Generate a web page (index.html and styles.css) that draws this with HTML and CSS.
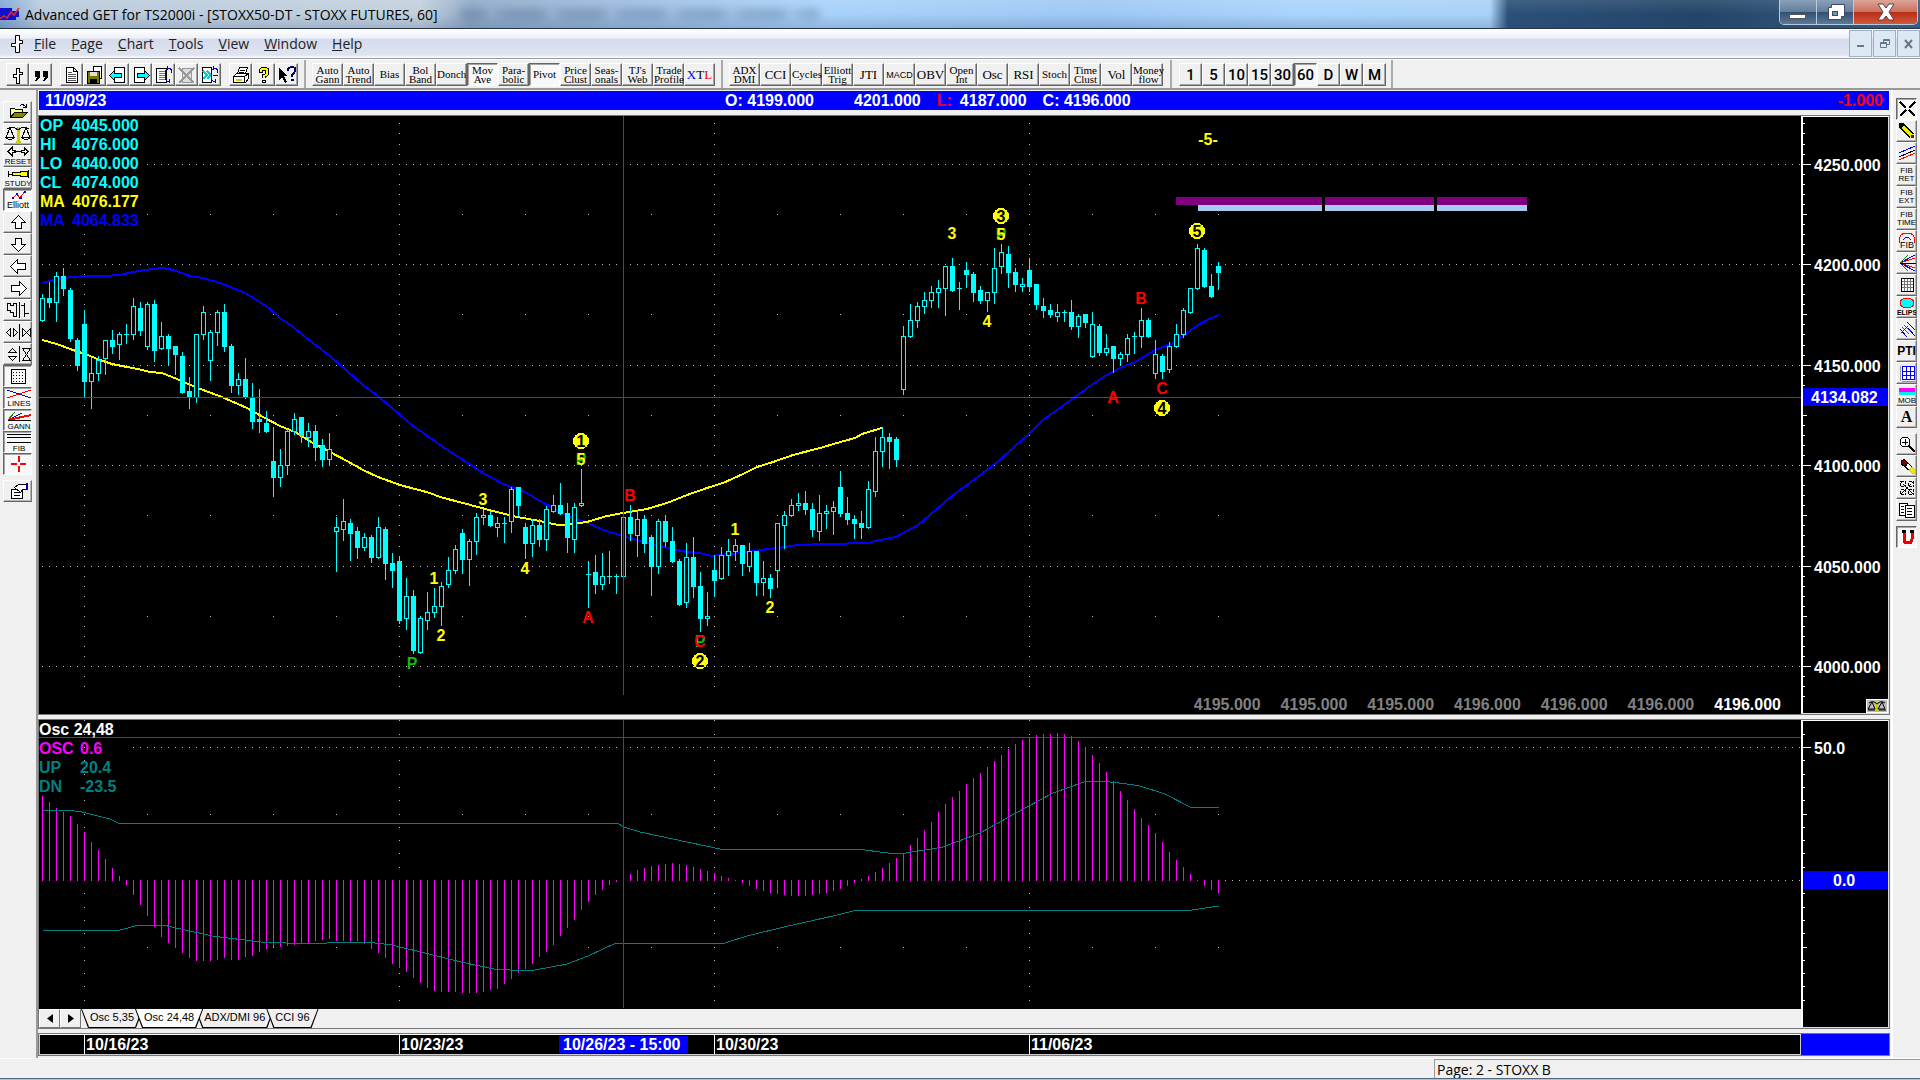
FILE: index.html
```html
<!DOCTYPE html>
<html lang="en">
<head>
<meta charset="utf-8">
<title>Advanced GET for TS2000i</title>
<link rel="stylesheet" href="styles.css">
</head>
<body>
<header class="titlebar">
  <svg class="app-icon" width="20" height="16" viewBox="0 0 20 16"><path d="M0 2h12v3h7v6h-3v3H0z" fill="#11c"/><path d="M0 13l4-3 3 2 4-6 3 3 5-7" fill="none" stroke="#e22" stroke-width="1.5"/></svg>
  <h1>Advanced GET for TS2000i - [STOXX50-DT - STOXX FUTURES, 60]</h1>
  <div class="glass-smear"></div>
  <div class="window-controls">
    <button class="wc" aria-label="Minimize"><svg width="20" height="20"><rect x="1.500" y="12.500" width="16" height="4" fill="#fff" stroke="#555"/></svg></button>
    <button class="wc" aria-label="Restore"><svg width="22" height="20"><path d="M7.500 2.500h13v12h-3v3h-13v-12h3z" fill="#fff" stroke="#446"/><rect x="8.500" y="9.500" width="5" height="4" fill="#69b" stroke="#446"/></svg></button>
    <button class="wc wc-close" aria-label="Close"><svg width="20" height="18"><path d="M2 1h5l3 4 3-4h5l-5 8 5 8h-5l-3-4-3 4H2l5-8z" fill="#fff" stroke="#544"/></svg></button>
  </div>
</header>

<nav class="menubar">
  <svg class="doc-icon" width="14" height="20" viewBox="0 0 14 20"><path d="M5.500 1.500h4v5h3v3h-3v9h-4v-6h-4v-3h4z" fill="#fff" stroke="#000"/></svg>
  <a href="#"><u>F</u>ile</a><a href="#"><u>P</u>age</a><a href="#"><u>C</u>hart</a><a href="#"><u>T</u>ools</a><a href="#"><u>V</u>iew</a><a href="#"><u>W</u>indow</a><a href="#"><u>H</u>elp</a>
  <div class="mdi-controls">
    <button aria-label="Minimize chart"><svg width="14" height="14"><rect x="3" y="8" width="7" height="2" fill="#678"/></svg></button>
    <button aria-label="Restore chart"><svg width="14" height="14" fill="none" stroke="#678"><path d="M5.500 5V2.500h6v5H9M5 3.500h6"/><path d="M2.500 5.500h6v5h-6zM2 6.500h6"/></svg></button>
    <button aria-label="Close chart"><svg width="14" height="14"><path d="M3 3l7 8M10 3l-7 8" stroke="#678" stroke-width="2"/></svg></button>
  </div>
</nav>

<div class="toolbar">
  <div class="tools">
    <button class="tb" aria-label="Chart"><svg class="ic"><path d="M8.500 3.500h3v4h3v2h-3v9h-3v-6h-3v-3h3z" fill="#fff" stroke="#000"/></svg></button>
    <button class="tb" aria-label="Quote"><svg class="ic"><path d="M4 6h5v6l-3 4H4l2-4H4zM12 6h5v6l-3 4h-2l2-4h-2z"/></svg></button>
  </div>
  <div class="tools">
    <button class="tb" aria-label="New"><svg class="ic"><path d="M4.500 2.500h7l4 4v11h-11zM11.500 2.500v4h4" fill="#fff" stroke="#000"/><path d="M6 7h4M6 9h8M6 11h8M6 13h8M6 15h8" stroke="#555"/></svg></button>
    <button class="tb" aria-label="Save pages"><svg class="ic"><path d="M8.500 1.500h8v12h-8z" fill="#fff" stroke="#000"/><path d="M2.500 6.500h12v12h-12z" fill="#770" stroke="#000"/><path d="M5 7h7v4H5z" fill="#ddd"/><path d="M5 14h7v4H5z"/></svg></button>
    <button class="tb" aria-label="Previous page"><svg class="ic"><path d="M6.500 2.500h10v15h-10z" fill="#fff" stroke="#000"/><path d="M1.500 10.500l5-5v3h7v4h-7v3z" fill="#0ff" stroke="#000"/></svg></button>
    <button class="tb" aria-label="Next page"><svg class="ic"><path d="M3.500 2.500h10v15h-10z" fill="#fff" stroke="#000"/><path d="M18.500 10.500l-5-5v3h-7v4h7v3z" fill="#0ff" stroke="#000"/></svg></button>
    <button class="tb" aria-label="Cycle page"><svg class="ic"><path d="M2.500 3.500h10v14h-10z" fill="#fff" stroke="#000"/><path d="M4.500 6h6M4.500 8h6M4.500 10h6M4.500 12h6M4.500 14h6" stroke="#777"/><path d="M15 3q-4 0-4 7t4 7M13 1v4M15 14v4M15 3q3 1 3 5" fill="none" stroke="#00c"/></svg></button>
    <button class="tb" aria-label="Delete page"><svg class="ic"><path d="M5.500 3.500h9v14h-9z" fill="#ddd" stroke="#999"/><path d="M2 3l15 15M17 3L2 18" stroke="#999" stroke-width="2"/></svg></button>
    <button class="tb" aria-label="Cycle all"><svg class="ic"><path d="M2.500 2.500h9v15h-9z" fill="#fff" stroke="#000"/><path d="M3 6l4 4-4 4M7 6l4 4-4 4" fill="none" stroke="#0cc" stroke-width="2"/><path d="M15 3q-4 0-4 7t4 7M13 1v4M15 14v4M15 3q3 1 3 5M13 10h5" fill="none" stroke="#00c"/></svg></button>
  </div>
  <div class="tools">
    <button class="tb" aria-label="Print"><svg class="ic"><path d="M6.500 8.500l2-6h8l-2 6M2.500 11.500l3-3h12v5l-3 4h-12zM2.500 11.500h11l4-3M13.500 11.500v6" fill="#fff" stroke="#000"/><path d="M5 15h6" stroke="#cc0" stroke-width="2"/><path d="M9 5h5M8 7h5" stroke="#000"/></svg></button>
    <button class="tb" aria-label="Help"><svg class="ic"><path d="M7 8V5q0-1 3-1t3 1v3q0 2-3 3v2" fill="none" stroke="#000" stroke-width="4"/><path d="M7 7V5q0-1 3-1t3 1v3q0 2-3 3v2" fill="none" stroke="#ff0" stroke-width="2"/><path d="M8.500 15.500h3v2h-3z" fill="#ff0" stroke="#000"/></svg></button>
    <button class="tb" aria-label="What is this"><svg class="ic"><path d="M2 3l9 8H7l3 6-2 1-3-6-3 3z"/><path d="M11 6q0-4 4-4t3 4q0 2-3 4v2M14 15h3" fill="none" stroke="#006" stroke-width="2"/></svg></button>
  </div>
  <div class="tools wide">
    <button class="tb">Auto<br>Gann</button><button class="tb">Auto<br>Trend</button><button class="tb">Bias</button><button class="tb">Bol<br>Band</button><button class="tb">Donch</button><button class="tb on">Mov<br>Ave</button><button class="tb">Para-<br>bolic</button><button class="tb on">Pivot</button><button class="tb">Price<br>Clust</button><button class="tb">Seas-<br>onals</button><button class="tb">TJ's<br>Web</button><button class="tb">Trade<br>Profile</button><button class="tb big"><span><i class="blue">X</i>T<i class="red">L</i></span></button>
  </div>
  <div class="tools wide">
    <button class="tb">ADX<br>DMI</button><button class="tb big">CCI</button><button class="tb">Cycles</button><button class="tb">Elliott<br>Trig</button><button class="tb big">JTI</button><button class="tb sans">MACD</button><button class="tb big">OBV</button><button class="tb">Open<br>Int</button><button class="tb big">Osc</button><button class="tb big">RSI</button><button class="tb">Stoch</button><button class="tb">Time<br>Clust</button><button class="tb big">Vol</button><button class="tb">Money<br>flow</button>
  </div>
  <div class="tools periods">
    <button class="tb">1</button><button class="tb">5</button><button class="tb">10</button><button class="tb">15</button><button class="tb">30</button><button class="tb on">60</button><button class="tb">D</button><button class="tb">W</button><button class="tb">M</button>
  </div>
</div>

<main class="desk">
  <aside class="side side-left">
    <button class="sb" aria-label="Open"><svg class="sic"><path d="M6.500 15.500v-9h4l1 1h7v3h-8z" fill="#ff8" stroke="#000"/><path d="M6.500 15.500l4-5h13l-5 5z" fill="#880" stroke="#000"/><path d="M16 4q3-3 6 1m0-3v3h-3" fill="none" stroke="#000"/></svg></button>
    <button class="sb" aria-label="Scales"><svg class="sic"><path d="M14 3v15M12 18h5" stroke="#cc0" stroke-width="3"/><path d="M3 5q5-4 11 1 6-5 11-1M6 4l-4 9h8zM22 4l-4 9h8zM2 14q4 3 8 0M18 14q4 3 8 0" fill="none" stroke="#000"/></svg></button>
    <button class="sb"><svg class="sic"><path d="M10 5.500h8M4 5.500l4-4v3h3v2H8v3zM24 5.500l-4-4v3h-3v2h3v3z" fill="#fff" stroke="#000"/><text x="14" y="18">RESET</text></svg></button>
    <button class="sb"><svg class="sic"><path d="M4 3v6M4 6h4M24 2v8" stroke="#000"/><path d="M8.500 4.500h8v-1h7v5h-7v-1h-8z" fill="#ff0" stroke="#000"/><text x="14" y="18">STUDY</text></svg></button>
    <button class="sb on"><svg class="sic"><path d="M9 8l4-4 3 4 5-7" fill="none" stroke="#f00"/><path d="M8 7h2v2H8zM12 3h2v2h-2zM15 7h3v2h-3zM20 1h2v2h-2z" fill="#00f"/><text x="14" y="18" class="t9">Elliott</text></svg></button>
    <button class="sb" aria-label="Up"><svg class="sic"><path d="M14.500 3.500l7 7h-4v6h-6v-6h-4z" fill="#fff" stroke="#000"/></svg></button>
    <button class="sb" aria-label="Down"><svg class="sic"><path d="M14.500 17.500l7-7h-4v-6h-6v6h-4z" fill="#fff" stroke="#000"/></svg></button>
    <button class="sb" aria-label="Left"><svg class="sic"><path d="M6.500 10.500l7-7v4h8v6h-8v4z" fill="#fff" stroke="#000"/></svg></button>
    <button class="sb" aria-label="Right"><svg class="sic"><path d="M22.500 10.500l-7-7v4h-8v6h8v4z" fill="#fff" stroke="#000"/></svg></button>
    <button class="sb" aria-label="Bar style"><svg class="sic"><path d="M3.500 3.500h3v2h3v-2h3v13h-3v-4h-3v-2h-3zM15.500 2v16M20.500 3v14M17 5.500h3M21 13.500h4" fill="none" stroke="#000"/></svg></button>
    <button class="sb" aria-label="Bar spacing"><svg class="sic"><path d="M6.500 6.500v8l-4-4zM9.500 6.500v8l4-4zM15.500 2v16M18.500 6.500v8l4-4zM26.500 6.500v8l-4-4z" fill="none" stroke="#000"/></svg></button>
    <button class="sb" aria-label="Vertical scale"><svg class="sic"><path d="M4.500 8.500h8l-4-4zM4.500 12.500h8l-4 4zM15.500 2v16M18.500 4.500h8l-8 12h8z" fill="none" stroke="#000"/></svg></button>
    <button class="sb on" aria-label="Grid"><svg class="sic"><rect x="7.500" y="3.500" width="14" height="14" fill="none" stroke="#000"/><path d="M9 6.500h12M9 9.500h12M9 12.500h12M9 15.500h12" stroke="#000" stroke-dasharray="1 2"/></svg></button>
    <button class="sb on"><svg class="sic"><path d="M3 2l24 8" stroke="#00f"/><path d="M27 2L3 10" stroke="#f00"/><text x="15" y="18">LINES</text></svg></button>
    <button class="sb on"><svg class="sic"><path d="M4 10L11 2" stroke="#080"/><path d="M4 10L18 3" stroke="#00f"/><path d="M4 10l23-5" stroke="#f00" stroke-width="2"/><path d="M4 10.500h23" stroke="#000"/><text x="15" y="19">GANN</text></svg></button>
    <button class="sb on"><svg class="sic"><path d="M3 2.500h24M3 5.500h24M3 10.500h24" stroke="#000"/><text x="15" y="19">FIB</text></svg></button>
    <button class="sb on" aria-label="Crosshair"><svg class="sic"><path d="M7 9h6v2H7zM16 9h6v2h-6zM14 2h2v6h-2zM14 12h2v6h-2z" fill="#f00"/></svg></button>
    <button class="sb gap" aria-label="Properties"><svg class="sic"><path d="M7.500 8.500h11v9h-11z" fill="#fff" stroke="#000"/><path d="M10 11.500h6M10 14.500h6" stroke="#000"/><path d="M10.500 6.500l4-3h8v5h-4l-2 3z" fill="#fff" stroke="#000"/><path d="M22 2h2v7h-2z" fill="#00a"/></svg></button>
  </aside>

  <section class="workspace">
    <div class="infobar">
      <span class="date">11/09/23</span>
      <div class="quote"><span class="q-o">O: 4199.000</span><span class="q-h">4201.000</span><span class="q-l"><b class="red">L:</b><b>4187.000</b></span><span>C: 4196.000</span></div>
      <span class="red">-1.000</span>
    </div>

    <div class="panel panel-price">
      <div class="plot">
        <svg class="canvas" id="price-plot" role="img" aria-label="STOXX50 60 minute candles"></svg>
        <table class="legend">
          <tr class="aqua"><th>OP</th><td>4045.000</td></tr>
          <tr class="aqua"><th>HI</th><td>4076.000</td></tr>
          <tr class="aqua"><th>LO</th><td>4040.000</td></tr>
          <tr class="aqua"><th>CL</th><td>4074.000</td></tr>
          <tr class="yellow"><th>MA</th><td>4076.177</td></tr>
          <tr class="blue"><th>MA</th><td>4064.833</td></tr>
        </table>
        <div class="last-prices"><span>4195.000</span><span>4195.000</span><span>4195.000</span><span>4196.000</span><span>4196.000</span><span>4196.000</span><strong>4196.000</strong></div>
      </div>
      <div class="axis">
        <svg class="canvas" id="price-axis" role="img" aria-label="Price scale"></svg>
        <button class="scale-btn" aria-label="Scale"><svg width="20" height="12"><path d="M10 2v9M8 11h4" stroke="#cc0" stroke-width="2"/><path d="M2 3q4-3 8 1 4-4 8-1M5 2l-4 7h7zM15 2l-4 7h7zM1 10h7M12 10h7" fill="none" stroke="#000"/></svg></button>
      </div>
    </div>

    <div class="panel panel-osc">
      <div class="osc-stack">
        <div class="plot">
          <svg class="canvas" id="osc-plot" role="img" aria-label="Oscillator"></svg>
          <table class="legend legend-osc">
            <tr class="white"><th colspan="2">Osc 24,48</th></tr>
            <tr class="magenta"><th>OSC</th><td>0.6</td></tr>
            <tr class="teal"><th>UP</th><td>20.4</td></tr>
            <tr class="teal"><th>DN</th><td>-23.5</td></tr>
          </table>
        </div>
        <div class="tabs">
          <button class="nav" aria-label="Scroll tabs left"><svg width="6" height="9"><path d="M6 0v9L0 4.500z"/></svg></button>
          <button class="nav" aria-label="Scroll tabs right"><svg width="6" height="9"><path d="M0 0v9l6-4.500z"/></svg></button>
          <button class="tab"><span>Osc 5,35</span></button><button class="tab active"><span>Osc 24,48</span></button><button class="tab"><span>ADX/DMI 96</span></button><button class="tab"><span>CCI 96</span></button>
        </div>
      </div>
      <div class="axis"><svg class="canvas" id="osc-axis" role="img" aria-label="Oscillator scale"></svg></div>
    </div>

    <div class="dates">
      <div class="date-strip">
        <svg class="canvas" id="date-axis" role="img" aria-label="Dates"></svg>
      </div>
      <div class="date-end"></div>
    </div>
  </section>

  <aside class="side side-right">
    <button class="sb on" aria-label="Pointer"><svg class="ric"><path d="M3 3l6 6M12 11l6 6M18 3l-6 6M9 11l-6 6" stroke="#000" stroke-width="2"/></svg></button>
    <button class="sb" aria-label="Pencil"><svg class="ric"><path d="M4 4l11 11" stroke="#000" stroke-width="6"/><path d="M6 6l9 9" stroke="#ee0" stroke-width="3"/><path d="M2 2h4v4H2z"/><path d="M14 14h3v3h-3z" fill="#900"/></svg></button>
    <button class="sb" aria-label="Trend lines"><svg class="ric"><path d="M2 10L18 3" stroke="#00f"/><path d="M2 14L18 7" stroke="#000"/><path d="M2 17l16-7" stroke="#f00"/></svg></button>
    <button class="sb two">FIB<br>RET</button>
    <button class="sb two">FIB<br>EXT</button>
    <button class="sb two">FIB<br>TIME</button>
    <button class="sb"><svg class="ric"><path d="M3 12q-2-10 7-10t7 10" fill="none" stroke="#f00"/><path d="M6 9q4-6 8 0" fill="none" stroke="#00f"/><text x="10" y="17" class="t9">FIB</text></svg></button>
    <button class="sb" aria-label="Gann fan"><svg class="ric"><path d="M3 10L18 2M3 10l15 8" stroke="#00f"/><path d="M3 10l15-5M3 10l15 5" stroke="#f00"/><path d="M3 10l8-8M3 10l8 8" stroke="#080"/><path d="M3 10.500h16" stroke="#000"/></svg></button>
    <button class="sb" aria-label="Box grid"><svg class="ric"><path d="M4.500 3.500h12v13h-12z" fill="#fff" stroke="#000"/><path d="M7.500 4v12M10.500 4v12M13.500 4v12M5 6.500h11M5 9.500h11M5 12.500h11" stroke="#777"/></svg></button>
    <button class="sb"><svg class="ric"><ellipse cx="10" cy="6" rx="7" ry="5" fill="#0ff" stroke="#f00"/><text x="10" y="18" class="b">ELIPS</text></svg></button>
    <button class="sb" aria-label="Pitchfork"><svg class="ric"><path d="M10 3l8 8M3 10l7 8M11 9l7 8" stroke="#00a"/><path d="M7 6l7 7M5 8l7 7" stroke="#080"/><path d="M13 5l-9 9" stroke="#a00" stroke-dasharray="2 1"/></svg></button>
    <button class="sb pti">PTI</button>
    <button class="sb" aria-label="Blue grid"><svg class="ric"><path d="M5.500 3.500h12v13h-12zM9.500 3v14M13.500 3v14M5 8.500h13M5 12.500h13" fill="#fff" stroke="#00f"/><path d="M3.500 3v15M5 18.500h13" stroke="#999"/></svg></button>
    <button class="sb"><svg class="ric"><path d="M2 3h16v4H2z" fill="#f0f"/><path d="M2 7h16v3H2z" fill="#0ee"/><text x="10" y="18">MOB</text></svg></button>
    <button class="sb letter">A</button>
    <button class="sb gap" aria-label="Zoom"><svg class="ric"><circle cx="8" cy="8" r="5" fill="#fff" stroke="#000"/><path d="M8.500 5v6M5 8.500h6" stroke="#000"/><path d="M12 12l6 6" stroke="#000" stroke-width="2"/></svg></button>
    <button class="sb" aria-label="Eraser"><svg class="ric"><path d="M4 5.500L7 3l4 4-3 4-4-3z" fill="#700" stroke="#000"/><path d="M8 11l3-4 4 4-3 3z" fill="#fff" stroke="#000"/><path d="M12 14l3-3 3 3v3h-3z" fill="#ee0" stroke="#cc0"/></svg></button>
    <button class="sb" aria-label="Delete all"><svg class="ric"><path d="M3.500 3.500h5v5h-5zM11.500 3.500h5v5h-5zM3.500 11.500h5v5h-5zM11.500 11.500h5v5h-5zM3 3l14 14M17 3L3 17" fill="none" stroke="#000" stroke-dasharray="3 1"/></svg></button>
    <button class="sb" aria-label="Copy"><svg class="ric"><path d="M2.500 3.500h8v12h-8z" fill="#fff" stroke="#000"/><path d="M8.500 5.500h9v12h-9z" fill="#fff" stroke="#000"/><path d="M4 7l3-1M4 10l3-1M4 13l3-1M10 9l5-1M10 12l5-1M10 15l5-1" stroke="#000"/></svg></button>
    <button class="sb on gap" aria-label="Magnet"><svg class="ric"><path d="M7 4v8q0 4 4 4t4-4V4" fill="none" stroke="#e00" stroke-width="3"/><path d="M5 3h4v3H5zM13 3h4v3h-4z"/></svg></button>
  </aside>
</main>

<footer class="status"><span>Page: 2 - STOXX B</span></footer>
<div class="taskbar-edge"></div>
<script src="chart.js"></script>
</body>
</html>
```
FILE: styles.css
```css
* { box-sizing: border-box; }
body {
  margin: 0;
  height: 100vh;
  display: flex;
  flex-direction: column;
  background: #f0f0f0;
  font-family: "Open Sans", "Noto Sans", sans-serif;
  font-size: 14px;
  color: #000;
  overflow: hidden;
}
button { font: inherit; color: inherit; padding: 0; margin: 0; border: 0; background: none; }
svg { display: block; }
i { font-style: normal; }
.red { color: #f00; }
.blue { color: #00f; }
.aqua { color: #0ff; }
.yellow { color: #ff0; }
.magenta { color: #f0f; }
.teal { color: #008080; }
.white { color: #fff; }

.titlebar {
  display: flex;
  align-items: center;
  height: 29px;
  flex: none;
  position: relative;
  border-bottom: 1px solid #26364a;
  background:
    linear-gradient(rgba(255,255,255,.1), rgba(255,255,255,0) 50%, rgba(40,70,110,.2)),
    linear-gradient(90deg, #7fa5d6 0, #b9cbdd 40px, #c3d0dd 420px, #90aac8 470px, #9fc0e4 660px, #a9d2fa 820px, #9ec8f4 1100px, #a9d4fc 1300px, #a9d2f8 1490px, #2b5079 1508px, #234568 1700px, #3a5f86 100%);
}
.app-icon { margin-right: 5px; }
.titlebar h1 { margin: 0; font-size: 14px; font-weight: 400; white-space: nowrap; z-index: 1; }
.glass-smear {
  width: 360px;
  height: 10px;
  margin-left: 22px;
  filter: blur(4px);
  opacity: .35;
  background: repeating-linear-gradient(90deg, #456080 0 22px, #8aa5c4 28px 34px, #50698a 44px 60px);
}
.window-controls {
  display: flex;
  align-self: flex-start;
  margin-left: auto;
  margin-right: 2px;
  height: 25px;
  border: 1px solid #b9cada;
  border-top: 0;
  border-radius: 0 0 5px 5px;
  overflow: hidden;
}
.wc {
  width: 37px;
  display: grid;
  place-items: center;
  border-right: 1px solid #b9cada;
  background: linear-gradient(#8aa0b8, #657f9c 48%, #31506f 50%, #5a7a9a);
}
.wc-close { width: 63px; border: 0; background: linear-gradient(#dca598, #cc7060 48%, #b82c14 50%, #d05a3c); }

.menubar {
  display: flex;
  align-items: center;
  gap: 15px;
  height: 30px;
  flex: none;
  padding-left: 10px;
  border-bottom: 1px solid #999;
  background: linear-gradient(#fff, #eef1f8 30%, #d5dbeb 36%, #dfe4f3 90%, #fff);
}
.doc-icon { margin-right: -5px; }
.menubar a { color: #222; text-decoration: none; }
.mdi-controls { display: flex; gap: 1px; margin-left: auto; align-self: stretch; padding: 1px 0; }
.mdi-controls button { width: 23px; display: grid; place-items: center; border: 1px solid #9fb0c4; background: #dce9f5; }

.toolbar { display: flex; height: 31px; flex: none; border-top: 1px solid #fff; border-bottom: 2px solid #999; }
.tools { display: flex; padding: 3px 0 2px 8px; }
.tools:first-child { padding-left: 6px; }
.wide { margin-left: 6px; padding-left: 6px; border-left: 2px solid #aaa; }
.periods { margin-left: 7px; padding: 3px 5px 2px 7px; border-left: 2px solid #aaa; border-right: 2px solid #aaa; font: 500 15px/20px Roboto, sans-serif; }
.tb {
  width: 23px;
  height: 23px;
  display: grid;
  place-items: center;
  border: 1px solid;
  border-color: #fff #666 #666 #fff;
  box-shadow: inset -1px -1px #a5a5a5;
  background: #f0f0f0;
  white-space: nowrap;
}
.tb.on, .sb.on { border-color: #666 #fff #fff #666; box-shadow: inset 1px 1px #a5a5a5; background: #f8f8f8; }
.wide .tb { width: 31px; font: 11px/9px "Liberation Serif", serif; text-align: center; }
.wide .tb.big { font-size: 13px; }
.wide .tb.sans { font: 9px/10px "Liberation Sans", sans-serif; }
.ic { width: 20px; height: 20px; shape-rendering: crispEdges; }

.desk { flex: 1; display: flex; min-height: 0; }
.side { flex: none; display: flex; flex-direction: column; }
.side-left { width: 38px; padding: 11px 4px 0 3px; border-right: 2px solid #999; }
.side-right { width: 29px; padding: 8px 3px 0 3px; border-left: 2px solid #fff; }
.sb {
  height: 22px;
  flex: none;
  display: grid;
  place-items: center;
  border: 1px solid;
  border-color: #fff #777 #666 #fff;
  box-shadow: inset -1px -1px #b5b5b5;
  background: #f0f0f0;
  overflow: hidden;
}
.sb.gap { margin-top: 5px; }
.sic { width: 29px; height: 20px; shape-rendering: crispEdges; }
.ric { width: 20px; height: 20px; shape-rendering: crispEdges; }
.sb text { font: 8px "Liberation Sans", sans-serif; text-anchor: middle; }
.sb .t9 { font-size: 9px; }
.sb .b { font-size: 7px; font-weight: 700; }
.sb.two { font: 8px/8px "Liberation Sans", sans-serif; }
.pti { font: 700 12px/12px "Liberation Sans", sans-serif; }
.letter { font: 700 16px/16px "Liberation Serif", serif; }

.workspace {
  flex: 1;
  min-width: 0;
  display: flex;
  flex-direction: column;
  gap: 6px;
  padding: 1px 2px 3px 1px;
  font: 700 16px/19px "Liberation Sans", Arial, sans-serif;
}
.infobar {
  flex: none;
  display: flex;
  height: 19px;
  padding: 0 6px;
  background: #00f;
  color: #fff;
}
.infobar .date { flex: 0 0 37%; }
.infobar .red { color: #f00; margin-left: auto; }
.quote { display: flex; gap: 24px; }
.q-h { margin-left: 16px; }
.q-l { display: flex; gap: 8px; margin: 0 -8px; }
.q-l .red { margin: 0; }

.panel { display: grid; grid-template-columns: minmax(0, 1fr) 88px; min-height: 0; background: #000; outline: 1px solid #777; }
.panel-price { flex: 598 1 0; }
.panel-osc { flex: 308 1 0; }
.plot { position: relative; min-height: 0; min-width: 0; overflow: hidden; background: #000; }
.canvas { position: absolute; inset: 0; width: 100%; height: 100%; shape-rendering: crispEdges; }
.canvas text { font: 700 16px "Liberation Sans", Arial, sans-serif; }
.axis { position: relative; border: 1px solid #ddd; border-top-color: #fff; border-left: 2px solid #fff; }
.scale-btn { position: absolute; right: 0; bottom: 0; width: 22px; height: 14px; border: 1px solid #fff; background: #bbb; }

.legend { position: relative; border-collapse: collapse; background: #000; }
.legend th, .legend td { height: 19px; padding: 0 0 0 1px; text-align: left; line-height: 19px; }
.legend th { min-width: 32px; }
.legend-osc { background: none; }
.legend-osc th { min-width: 40px; padding-left: 0; }
.last-prices { position: absolute; right: 20px; bottom: 0; display: flex; gap: 20px; color: #808080; }
.last-prices strong { color: #fff; }

.osc-stack { display: flex; flex-direction: column; min-height: 0; }
.osc-stack .plot { flex: 1; }
.tabs { display: flex; flex: none; height: 20px; background: #f0f0f0; border-top: 1px solid #000; font: 11px/16px "Liberation Sans", Arial, sans-serif; }
.nav { width: 21px; display: grid; place-items: center; border: 1px solid; border-color: #fff #777 #777 #fff; background: #f0f0f0; }
.tab { margin-right: -8px; padding: 0 1px 1px; background: #000; clip-path: polygon(0 0, 100% 0, calc(100% - 7px) 100%, 7px 100%); }
.tab span { display: block; height: 100%; padding: 0 8px; background: #f0f0f0; clip-path: polygon(0 0, 100% 0, calc(100% - 7px) 100%, 7px 100%); }
.tab.active { z-index: 1; }
.tab.active span { background: #fff; }

.dates { flex: none; display: grid; grid-template-columns: minmax(0, 1fr) 88px; height: 21px; outline: 1px solid #777; }
.date-strip { position: relative; background: #000; border: 1px solid #ccc; border-top-color: #fff; }
.date-end { background: #00f; }

.status { flex: none; display: grid; grid-template-columns: 1434px 1fr; height: 20px; border-top: 1px solid #fff; }
.status span { grid-column: 2; padding-left: 2px; line-height: 19px; border-left: 1px solid #999; border-top: 1px solid #999; }
.taskbar-edge { flex: none; height: 2px; background: #55677a; border-bottom: 1px solid #a9c3d8; }
```
FILE: chart.js
```js
const NS = 'http://www.w3.org/2000/svg';
const CYAN = '#0ff';

// Window coordinates: bar n sits at barX(n).
const barX = n => 42 + 7 * n;
const priceY = p => Math.floor(666.6 - 2.01 * (p - 4000));
const oscY = v => Math.round(880 - 2.66 * v);

function add(parent, tag, attrs, text) {
  const el = document.createElementNS(NS, tag);
  for (const k in attrs) el.setAttribute(k, attrs[k]);
  if (text !== undefined) el.textContent = text;
  parent.appendChild(el);
  return el;
}
const layer = (id, left, top) =>
  add(document.getElementById(id), 'g', { transform: `translate(${-left},${-top})` });
const rect = (g, x, y, width, height, fill) => add(g, 'rect', { x, y, width, height, fill });
const poly = (g, points, stroke, w) =>
  add(g, 'polyline', { points, fill: 'none', stroke, 'stroke-width': w });
const dots = (g, x, y) =>
  add(g, 'line', { x1: x, x2: 4000, y1: y + 0.5, y2: y + 0.5, stroke: '#c0c0c0', 'stroke-dasharray': '1 6' });

// Each candle: high, body top, body bottom, low, and 1 when the bar closed down.
const candles = [
[294,298,321,322,0],[282,298,303,308,1],[272,276,303,322,0],[268,276,289,296,1],[288,290,339,342,1],[338,340,366,371,1],
[310,324,382,397,1],[357,373,382,409,0],[356,360,374,381,0],[340,340,359,375,0],[330,340,347,354,1],[332,334,345,360,0],
[324,334,334,344,0],[298,306,335,340,0],[302,308,331,336,1],[302,304,347,350,0],[300,304,351,362,1],[322,336,349,350,0],
[334,336,349,366,1],[346,346,355,375,1],[352,356,393,394,1],[377,391,398,409,1],[334,334,398,403,0],[306,312,335,340,0],
[330,332,361,381,0],[310,312,333,346,0],[304,312,347,352,1],[344,346,386,393,1],[373,379,386,395,0],[358,379,398,399,1],
[383,397,422,429,1],[389,419,422,433,1],[411,423,432,433,1],[427,461,478,497,1],[449,465,478,487,0],[429,431,466,475,0],
[413,419,432,435,0],[417,417,436,443,1],[423,431,438,447,0],[425,431,448,461,1],[439,445,460,467,1],[433,449,460,466,0],
[517,527,532,572,0],[499,521,530,541,0],[519,523,534,561,1],[527,531,548,559,1],[533,537,548,551,0],[535,537,558,563,1],
[517,527,558,559,0],[527,529,564,580,1],[553,563,571,588,1],[557,561,621,624,1],[578,596,619,630,0],[590,596,651,654,1],
[616,618,653,654,0],[592,612,621,630,0],[588,606,613,618,0],[582,586,607,626,0],[557,570,585,588,0],[545,549,571,574,0],
[529,533,560,574,1],[539,541,560,586,0],[513,517,542,555,0],[510,515,518,525,0],[511,515,526,527,1],[517,523,528,537,0],
[517,523,523,543,0],[487,489,522,533,0],[487,487,506,517,1],[523,527,544,559,1],[519,525,544,557,0],[519,525,540,547,1],
[506,509,540,551,0],[495,505,512,513,0],[483,505,514,515,1],[503,513,538,553,1],[503,507,540,553,0],[469,503,506,507,0],
[561,574,574,608,0],[555,572,585,594,1],[553,576,585,590,0],[551,576,576,584,0],[574,576,576,594,0],[515,517,577,586,0],
[505,517,534,541,1],[511,519,536,557,0],[515,519,544,553,1],[535,537,567,596,1],[519,521,567,574,0],[515,521,542,547,1],
[527,541,562,563,1],[559,561,605,606,1],[543,557,603,608,0],[537,557,587,598,1],[572,586,619,632,1],[592,616,619,626,0],
[555,570,581,597,1],[547,555,579,580,0],[539,551,556,576,0],[539,545,552,561,0],[545,545,564,576,1],[543,551,567,572,0],
[551,551,583,596,1],[561,578,583,596,0],[574,578,589,598,1],[523,523,571,588,0],[511,515,526,549,0],[499,505,516,517,0],
[493,503,506,511,0],[491,503,510,515,1],[503,509,530,537,1],[495,513,532,541,0],[505,511,514,529,0],[501,507,512,535,0],
[471,487,514,517,1],[497,513,520,525,1],[515,519,524,539,1],[511,523,528,539,1],[481,489,528,529,0],[437,451,492,497,0],
[427,437,452,467,0],[433,437,442,469,1],[437,439,460,467,1],[326,336,390,395,0],[304,320,337,338,0],[302,306,321,328,0],
[292,300,307,314,0],[286,292,301,308,0],[280,288,293,308,0],[266,266,289,316,0],[258,266,291,292,1],[282,288,288,310,0],
[262,270,275,288,1],[272,274,293,302,1],[286,290,301,304,1],[292,292,301,312,0],[248,268,293,304,0],[244,252,267,274,0],
[246,254,273,288,1],[268,272,285,292,1],[278,284,287,292,0],[258,270,287,292,1],[284,284,305,310,1],[298,306,311,318,1],
[304,310,315,318,1],[304,312,317,322,0],[310,312,312,322,0],[300,312,327,330,1],[314,316,327,338,0],[314,314,323,328,1],
[312,324,357,358,0],[324,326,353,356,1],[334,348,353,356,0],[346,346,359,373,1],[352,354,359,366,0],[334,338,355,362,0],
[332,336,336,354,0],[308,320,337,348,0],[318,320,337,338,1],[340,354,374,379,0],[354,356,372,379,1],[342,346,370,373,0],
[324,334,347,348,0],[308,310,335,338,0],[288,288,313,314,0],[244,248,289,290,0],[248,250,287,288,1],[274,286,297,298,1],
[262,266,273,290,1]];

const maSlow = '42,283 63,278 85,276 105,276 120,275 133,272 145,270 163,268 173,270 190,276 203,278 223,284 245,293 260,302 270,309 280,318 293,327 313,343 330,356 347,371 363,385 379,397 399,414 413,426 429,437 443,447 463,460 483,473 503,484 525,492 540,501 553,508 570,517 588,523 603,530 623,536 647,543 667,548 687,552 700,553 712,556 720,555 740,553 760,550 778,548 797,545 827,544 868,543 875,541 896,537 903,533 918,525 937,509 953,495 967,485 983,473 1000,460 1015,446 1029,434 1043,420 1060,408 1075,397 1093,384 1107,375 1120,368 1135,362 1155,350 1173,343 1187,333 1198,325 1207,320 1219,315';
const maFast = '42,340 57,344 70,349 85,354 100,360 112,364 127,367 138,369 150,372 162,373 177,379 188,384 203,390 222,397 247,408 263,417 280,426 295,432 313,443 330,452 347,461 363,470 378,477 400,485 430,493 440,497 463,503 493,511 517,517 540,521 558,525 565,525 587,522 607,516 623,513 647,509 667,503 687,495 707,488 723,483 743,474 757,467 773,462 793,455 820,448 837,443 855,438 862,434 882,428';

// Wave labels: text, centre x, baseline, colour.
const waves = [
['P',412,669,'#1b1'],['1',434,584,'#ff0'],['2',441,641,'#ff0'],['3',483,505,'#ff0'],['4',525,574,'#ff0'],
['P',581,465,'#1b1'],['5',581,465,'#ff0'],['A',588,623,'#f00'],['B',630,501,'#f00'],['P',700,647,'#1b1'],['C',700,647,'#f00'],
['1',735,535,'#ff0'],['2',770,613,'#ff0'],['3',952,239,'#ff0'],['P',1001,240,'#1b1'],['5',1001,240,'#ff0'],['4',987,327,'#ff0'],
['B',1141,304,'#f00'],['A',1113,403,'#f00'],['C',1162,394,'#f00'],['-5-',1208,145,'#ff0']];
const majorWaves = [['1',581,441],['2',700,661],['3',1001,216],['5',1197,231],['4',1162,408]];
const weeks = [[84,'10/16/23'],[399,'10/23/23'],[714,'10/30/23'],[1029,'11/06/23']];

// Price panel
let g = layer('price-plot', 39, 116);
for (const p of [4000, 4050, 4100, 4150, 4200, 4250]) dots(g, p === 4250 ? 147 : 42, priceY(p));
for (const [x] of weeks) for (let p = 3990; p <= 4270; p += 5) rect(g, x, priceY(p), 1, 1, '#c0c0c0');
for (const p of [4025, 4075, 4125, 4175, 4225])
  for (let x = 147; x <= 1218; x += 63) rect(g, x, priceY(p), 1, 1, '#c0c0c0');
for (const [x, w] of [[1176, 146], [1325, 109], [1437, 90]]) rect(g, x, 197, w, 8, '#800080');
for (const [x, w] of [[1198, 124], [1325, 109], [1437, 90]]) rect(g, x, 205, w, 6, '#a6caf0');
poly(g, maSlow, '#00f', 2);
poly(g, maFast, '#ff0', 2);
candles.forEach(([high, top, bottom, low, down], n) => {
  const x = barX(n);
  rect(g, x, high, 1, low - high, CYAN);
  if (top === bottom) rect(g, x - 2, top, 5, 1, CYAN);
  else {
    rect(g, x - 2, top, 5, bottom - top, CYAN);
    if (!down) rect(g, x - 1, top + 1, 3, bottom - top - 2, '#000');
  }
});
rect(g, 39, 397, 4000, 1, '#f00');
rect(g, 623, 116, 1, 579, '#f00');
for (const [t, x, y, fill] of waves) add(g, 'text', { x, y, fill, 'text-anchor': 'middle' }, t);
for (const [t, x, y] of majorWaves) {
  add(g, 'circle', { cx: x, cy: y, r: 8, fill: '#ff0' });
  add(g, 'text', { x, y: y + 6, fill: '#000', 'text-anchor': 'middle' }, t);
}

// Price scale
g = layer('price-axis', 1803, 117);
for (let p = 3985; p <= 4270; p += 5) rect(g, 1803, priceY(p), p % 50 === 0 ? 8 : p % 25 === 0 ? 4 : 2, 1, '#fff');
for (let p = 4000; p <= 4250; p += 50) add(g, 'text', { x: 1814, y: priceY(p) + 7, fill: '#fff' }, p + '.000');
rect(g, 1803, 388, 90, 18, '#00f');
add(g, 'text', { x: 1811, y: 403, fill: '#fff' }, '4134.082');

// Oscillator panel: bar ends, measured from the zero line at 880
const osc = [796,802,808,812,816,824,832,842,850,859,868,876,886,896,906,917,928,938,944,949,954,959,962,962,962,961,959,961,961,
958,957,953,950,948,948,947,946,945,944,942,941,940,942,942,943,942,945,950,954,959,965,969,973,979,984,989,992,993,993,993,
994,994,994,993,991,990,985,980,974,970,965,958,953,946,937,929,921,911,903,896,891,886,883,880,
874,870,868,866,865,864,863,864,865,867,869,871,873,876,878,881,
884,887,890,892,894,895,896,897,897,897,896,895,894,892,890,887,884,879,876,872,
868,863,858,853,845,838,830,822,812,804,797,791,784,778,773,767,761,755,749,744,
740,737,735,734,734,733,734,736,741,747,755,763,772,781,791,800,809,818,825,833,
842,852,860,867,874,882,887,891,894];
const bandUp = '43,811 67,810 82,812 110,819 118,823 617,823 624,827 640,832 720,849 857,849 888,853 906,853 943,847 980,833 1016,813 1053,793 1084,782 1102,781 1127,784 1140,786 1165,794 1190,807 1219,807';
const bandDown = '43,930 120,930 139,925 163,925 212,936 261,942 286,943 327,943 347,942 367,942 392,945 433,955 461,962 494,969 510,970 535,970 567,964 588,956 616,943 725,943 747,936 784,927 833,916 857,910 1192,910 1219,906';

g = layer('osc-plot', 39, 720);
dots(g, 133, oscY(50));
dots(g, 42, oscY(0));
for (const [x] of weeks) for (let v = -45; v <= 60; v += 5) rect(g, x, oscY(v), 1, 1, '#c0c0c0');
for (const v of [25, -25]) for (let x = 147; x <= 1218; x += 63) rect(g, x, oscY(v), 1, 1, '#c0c0c0');
osc.forEach((y, n) => rect(g, barX(n), Math.min(y, 880), 1, Math.max(1, Math.abs(881 - y)), '#f0f'));
poly(g, bandUp, '#008080', 1);
poly(g, bandDown, '#008080', 1);
rect(g, 39, 737, 4000, 1, '#f00');
rect(g, 623, 720, 1, 900, '#f00');

g = layer('osc-axis', 1803, 721);
for (let v = -45; v <= 55; v += 5) rect(g, 1803, oscY(v), v % 50 === 0 ? 8 : v % 25 === 0 ? 4 : 2, 1, '#fff');
add(g, 'text', { x: 1814, y: 754, fill: '#fff' }, '50.0');
rect(g, 1803, 871, 90, 18, '#00f');
add(g, 'text', { x: 1833, y: 886, fill: '#fff' }, '0.0');

// Date strip
g = layer('date-axis', 40, 1035);
for (const [x, label] of weeks) {
  rect(g, x, 1035, 1, 20, '#fff');
  add(g, 'text', { x: x + 2, y: 1050, fill: '#fff' }, label);
}
rect(g, 559, 1036, 129, 17, '#00f');
add(g, 'text', { x: 563, y: 1050, fill: '#fff' }, '10/26/23 - 15:00');
```
